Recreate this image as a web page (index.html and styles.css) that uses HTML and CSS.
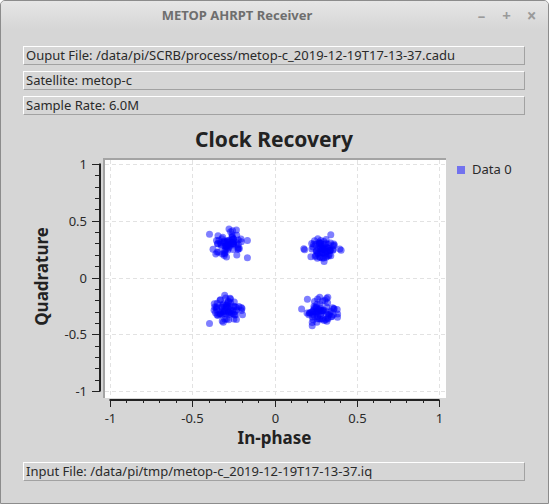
FILE: index.html
```html
<!doctype html>
<html lang="en">
<head>
<meta charset="utf-8">
<title>METOP AHRPT Receiver</title>
<link rel="stylesheet" href="styles.css">
</head>
<body>

<div class="window">

	<div class="titlebar">
		<span class="title">METOP AHRPT Receiver</span>
		<span class="btn">&#8211;</span>
		<span class="btn">+</span>
		<span class="btn close">&#215;</span>
	</div>

	<div class="content">

		<div class="field">Ouput File: /data/pi/SCRB/process/metop-c_2019-12-19T17-13-37.cadu</div>
		<div class="field">Satellite: metop-c</div>
		<div class="field">Sample Rate: 6.0M</div>

		<svg id="svgChart" class="chart" width="502" height="335" viewBox="0 0 502 335">

			<text class="chart-title" x="251" y="26">Clock Recovery</text>

			<rect class="plot" x="80" y="37" width="343" height="240"/>
			<rect class="frame" x="80" y="37" width="343" height="2"/>
			<rect class="frame" x="80" y="37" width="2" height="240"/>

			<g id="gGrid"></g>
			<g id="gPoints"></g>
			<g id="gAxes"></g>

			<text class="axis-label" x="251.5" y="323">In-phase</text>
			<text class="axis-label" transform="translate(25 155.5) rotate(-90)">Quadrature</text>

			<rect class="legend-mark" x="434" y="45" width="8" height="8"/>
			<text class="legend-text" x="449" y="53">Data 0</text>

		</svg>

		<div class="field">Input File: /data/pi/tmp/metop-c_2019-12-19T17-13-37.iq</div>

	</div>

</div>

<script>

const CH = {

	"ns": "http://www.w3.org/2000/svg",
	"seed": 11,
	"clusters": [ [ -0.28, 0.30 ], [ 0.29, 0.25 ], [ -0.28, -0.28 ], [ 0.28, -0.30 ] ]

};

CH.px = v => 251.5 + v * 164.5;
CH.py = v => 156.5 - v * 113.5;

CH.rnd = function() {

	CH.seed = ( CH.seed * 16807 ) % 2147483647;
	return ( CH.seed - 1 ) / 2147483646;

};

// gaussian, clipped so no point strays far from its cluster
CH.gauss = function() {

	const g = Math.sqrt( -2 * Math.log( CH.rnd() + 1e-9 ) ) * Math.cos( 2 * Math.PI * CH.rnd() );
	return Math.max( -2.3, Math.min( 2.3, g ) );

};

CH.add = function( parent, tag, attrs, text ) {

	const el = document.createElementNS( CH.ns, tag );
	for ( const key in attrs ) { el.setAttribute( key, attrs[ key ] ); }
	if ( text !== undefined ) { el.textContent = text; }
	parent.appendChild( el );
	return el;

};

CH.draw = function() {

	const majors = [ -1, -0.5, 0, 0.5, 1 ];

	majors.forEach( v => {

		const x = Math.round( CH.px( v ) ) + 0.5;
		const y = Math.round( CH.py( v ) ) + 0.5;

		CH.add( gGrid, "line", { "class": "grid", x1: x, y1: 39, x2: x, y2: 277 } );
		CH.add( gGrid, "line", { "class": "grid", x1: 82, y1: y, x2: 423, y2: y } );

		CH.add( gAxes, "text", { "class": "tick-x", x: x, y: 302 }, v );
		CH.add( gAxes, "text", { "class": "tick-y", x: 64, y: y + 4.5 }, v );

	} );

	for ( let i = 0; i <= 20; i++ ) {

		const v = -1 + i * 0.1;
		const major = i % 5 === 0;
		const x = Math.round( CH.px( v ) ) + 0.5;
		const y = Math.round( CH.py( v ) ) + 0.5;

		CH.add( gAxes, "line", { "class": "tick", x1: x, y1: 279, x2: x, y2: major ? 286 : 282 } );
		CH.add( gAxes, "line", { "class": "tick", x1: major ? 69 : 72, y1: y, x2: 77, y2: y } );

	}

	CH.add( gAxes, "line", { "class": "axis", x1: 77, y1: 42.5, x2: 77, y2: 270.5 } );
	CH.add( gAxes, "line", { "class": "axis", x1: 86.5, y1: 279, x2: 416.5, y2: 279 } );

	CH.clusters.forEach( c => {

		for ( let i = 0; i < 70; i++ ) {

			const vx = c[ 0 ] + CH.gauss() * 0.05;
			const vy = c[ 1 ] + CH.gauss() * 0.055;

			CH.add( gPoints, "circle", { "class": "dot", cx: CH.px( vx ).toFixed( 1 ), cy: CH.py( vy ).toFixed( 1 ), r: 3.5 } );

		}

	} );

};

CH.draw();

</script>
</body>
</html>
```

FILE: styles.css
```css
* { box-sizing: border-box; }

body { margin: 0; font: 13px "Noto Sans", "Open Sans", sans-serif; color: #2a2a2a; }

.window { width: 549px; height: 504px; background: #d6d6d6; border: 1px solid #8c8c8c;
	border-radius: 5px 5px 0 0; overflow: hidden; }

.titlebar { display: flex; align-items: center; height: 28px; padding: 0 4px 0 4px;
	background: linear-gradient( #e6e6e6, #d6d6d6 ); }

.title { flex: 1; text-align: center; font-weight: bold; color: #6e6e6e; }

.btn { width: 25px; text-align: center; font-weight: bold; font-size: 15px; color: #9a9a9a; }
.close { font-size: 17px; }

.content { display: flex; flex-direction: column; gap: 6px; padding: 17px 23px 0 22px; }

.field { height: 19px; line-height: 17px; padding: 0 2px; white-space: nowrap;
	border: 1px solid; border-color: #ffffff #a2a2a2 #a2a2a2 #ffffff; }

.chart { display: block; font-family: "Noto Sans", "Open Sans", sans-serif; }

.chart-title { font-size: 21px; font-weight: bold; text-anchor: middle; fill: #222; }

.plot { fill: #ffffff; }
.frame { fill: #a4a4a4; }

.grid { stroke: #e2e2e2; stroke-width: 1; stroke-dasharray: 4 3; }
.axis { stroke: #222; stroke-width: 2; }
.tick { stroke: #222; stroke-width: 1; }

.tick-x { font-size: 13px; text-anchor: middle; fill: #2a2a2a; }
.tick-y { font-size: 13px; text-anchor: end; fill: #2a2a2a; }

.axis-label { font-size: 17px; font-weight: bold; text-anchor: middle; fill: #222; }

.dot { fill: #0000ff; fill-opacity: 0.5; }

.legend-mark { fill: #7272ee; }
.legend-text { font-size: 13px; fill: #2a2a2a; }
```
